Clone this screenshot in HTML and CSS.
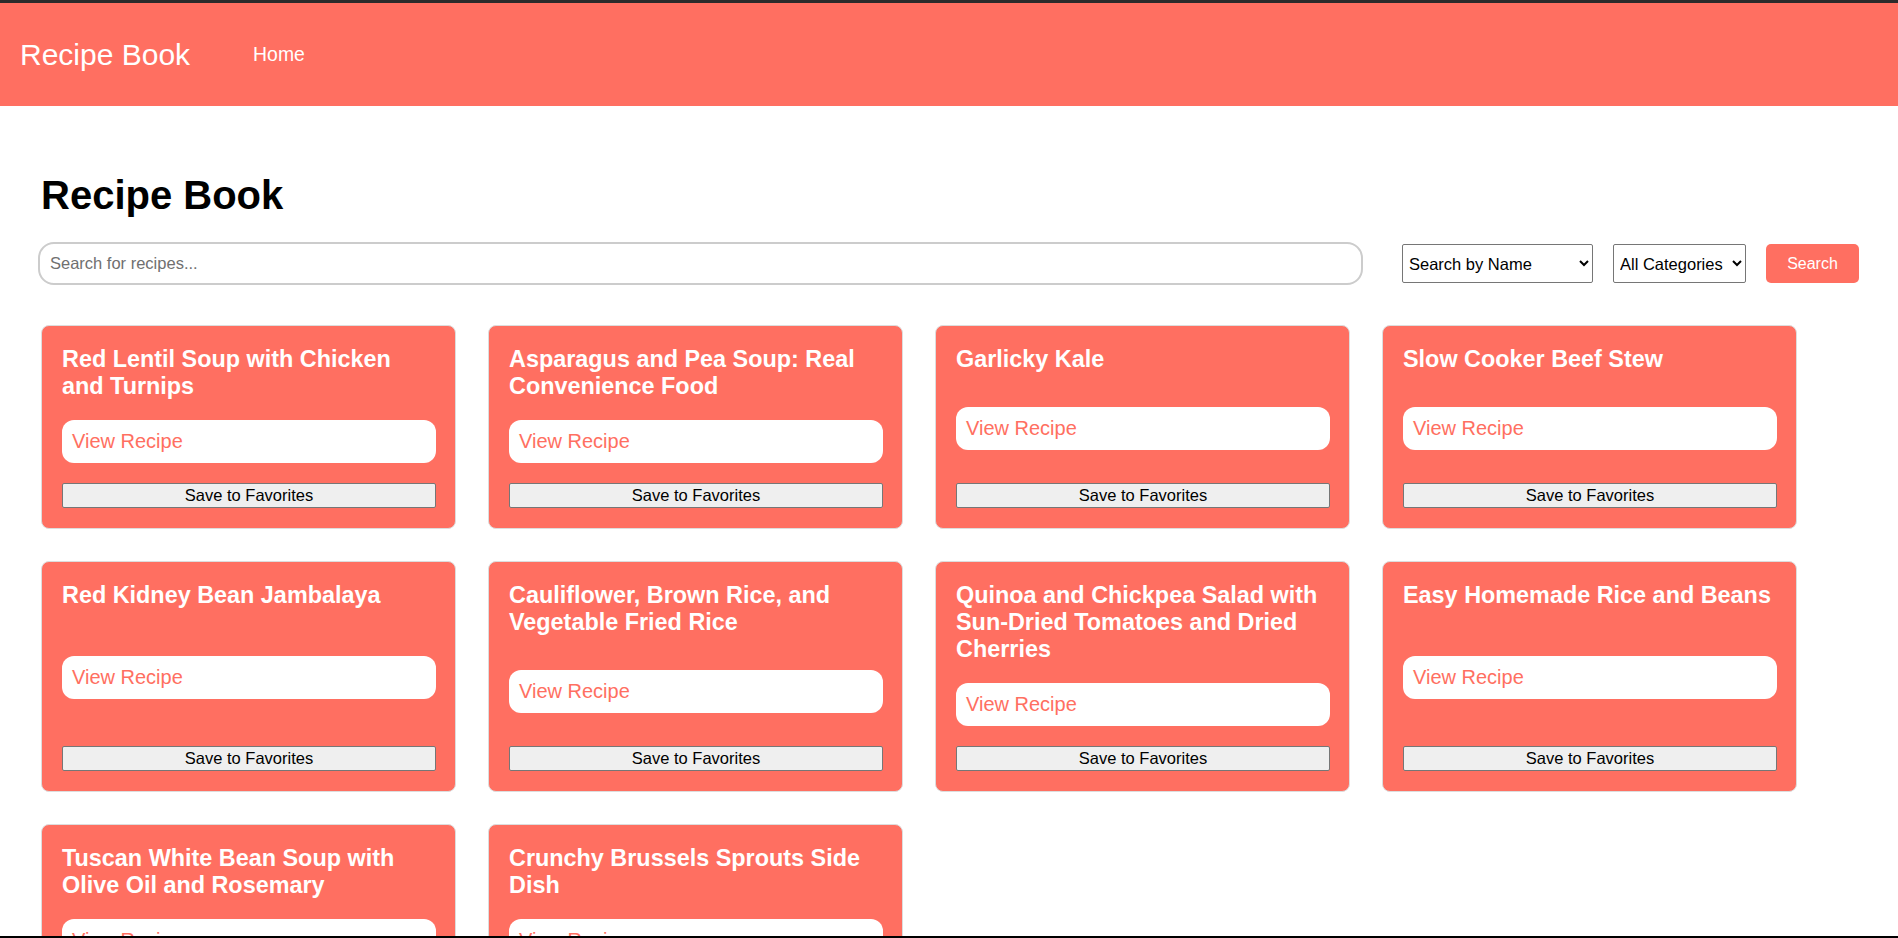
FILE: index.html
```html
<!DOCTYPE html>
<html lang="en">
<head>
<meta charset="utf-8">
<title>Recipe Book</title>
<link rel="stylesheet" href="styles.css">
</head>
<body>
<header class="site-header">
  <div class="brand">Recipe Book</div>
  <nav class="nav"><a class="nav-link" href="#">Home</a></nav>
</header>
<main class="main">
  <h1 class="page-title">Recipe Book</h1>
  <div class="search-row">
    <input class="search-input" type="text" placeholder="Search for recipes...">
    <select class="select select-mode">
      <option>Search by Name</option>
      <option>Search by Ingredient</option>
    </select>
    <select class="select select-cat">
      <option>All Categories</option>
    </select>
    <button class="search-btn" type="button">Search</button>
  </div>
  <div class="grid">
    <div class="card">
      <h3 class="card-title">Red Lentil Soup with Chicken and Turnips</h3>
      <a class="view-link" href="#">View Recipe</a>
      <button class="fav-btn" type="button">Save to Favorites</button>
    </div>
    <div class="card">
      <h3 class="card-title">Asparagus and Pea Soup: Real Convenience Food</h3>
      <a class="view-link" href="#">View Recipe</a>
      <button class="fav-btn" type="button">Save to Favorites</button>
    </div>
    <div class="card">
      <h3 class="card-title">Garlicky Kale</h3>
      <a class="view-link" href="#">View Recipe</a>
      <button class="fav-btn" type="button">Save to Favorites</button>
    </div>
    <div class="card">
      <h3 class="card-title">Slow Cooker Beef Stew</h3>
      <a class="view-link" href="#">View Recipe</a>
      <button class="fav-btn" type="button">Save to Favorites</button>
    </div>
    <div class="card">
      <h3 class="card-title">Red Kidney Bean Jambalaya</h3>
      <a class="view-link" href="#">View Recipe</a>
      <button class="fav-btn" type="button">Save to Favorites</button>
    </div>
    <div class="card">
      <h3 class="card-title">Cauliflower, Brown Rice, and Vegetable Fried Rice</h3>
      <a class="view-link" href="#">View Recipe</a>
      <button class="fav-btn" type="button">Save to Favorites</button>
    </div>
    <div class="card">
      <h3 class="card-title">Quinoa and Chickpea Salad with Sun-Dried Tomatoes and Dried Cherries</h3>
      <a class="view-link" href="#">View Recipe</a>
      <button class="fav-btn" type="button">Save to Favorites</button>
    </div>
    <div class="card">
      <h3 class="card-title">Easy Homemade Rice and Beans</h3>
      <a class="view-link" href="#">View Recipe</a>
      <button class="fav-btn" type="button">Save to Favorites</button>
    </div>
    <div class="card">
      <h3 class="card-title">Tuscan White Bean Soup with Olive Oil and Rosemary</h3>
      <a class="view-link" href="#">View Recipe</a>
      <button class="fav-btn" type="button">Save to Favorites</button>
    </div>
    <div class="card">
      <h3 class="card-title">Crunchy Brussels Sprouts Side Dish</h3>
      <a class="view-link" href="#">View Recipe</a>
      <button class="fav-btn" type="button">Save to Favorites</button>
    </div>
  </div>
</main>
</body>
</html>
```
FILE: styles.css
```css
* {
  box-sizing: border-box;
}

html {
  border-top: 3px solid #2b2b2b;
}

body {
  margin: 0;
  font-family: "Liberation Sans", Arial, sans-serif;
  background: #ffffff;
  color: #000000;
}

body::after {
  content: "";
  position: fixed;
  left: 0;
  right: 0;
  bottom: 0;
  height: 2px;
  background: #000000;
}

.site-header {
  display: flex;
  align-items: center;
  height: 103px;
  padding: 0 20px;
  background: #ff6f61;
  color: #ffffff;
}

.brand {
  font-size: 30px;
  margin-right: 63px;
}

.nav-link {
  color: #ffffff;
  text-decoration: none;
  font-size: 19.4px;
}

.main {
  padding: 40px 39px 40px 41px;
}

.page-title {
  font-size: 40px;
  font-weight: bold;
  margin: 27px 0 24px;
}

.search-row {
  display: flex;
  align-items: center;
  gap: 20px;
  margin-bottom: 40px;
}

.search-input {
  flex: 1;
  height: 43px;
  margin-left: -3px;
  margin-right: 19px;
  padding: 0 10px;
  border: 2px solid #cccccc;
  border-radius: 16px;
  font-family: "Liberation Sans", Arial, sans-serif;
  font-size: 16.5px;
  color: #000000;
  outline: none;
}

.search-input::placeholder {
  color: #707070;
}

.select {
  height: 39px;
  border: 1px solid #767676;
  border-radius: 2px;
  background: #ffffff;
  font-family: "Liberation Sans", Arial, sans-serif;
  font-size: 16.5px;
  color: #000000;
  padding: 0 2px;
}

.select-mode {
  width: 191px;
}

.select-cat {
  width: 133px;
}

.search-btn {
  height: 39px;
  width: 93px;
  border: none;
  border-radius: 5px;
  background: #ff6f61;
  color: #ffffff;
  font-family: "Liberation Sans", Arial, sans-serif;
  font-size: 16px;
}

.grid {
  display: grid;
  grid-template-columns: repeat(4, 415px);
  column-gap: 32px;
  row-gap: 32px;
}

.card {
  display: flex;
  flex-direction: column;
  justify-content: space-between;
  background: #ff6f61;
  border: 1px solid #dddddd;
  border-radius: 8px;
  padding: 20px 19px 20px 20px;
}

.card-title {
  margin: 0 0 20px;
  font-size: 23.4px;
  line-height: 27px;
  font-weight: bold;
  color: #ffffff;
}

.view-link {
  display: block;
  height: 43px;
  padding: 10px 10px;
  margin-bottom: 20px;
  background: #ffffff;
  border-radius: 12px;
  color: #ff6f61;
  text-decoration: none;
  font-size: 20px;
  line-height: 23px;
}

.fav-btn {
  display: block;
  width: 100%;
  height: 25px;
  padding: 0;
  background: #efefef;
  border: 1px solid #767676;
  border-radius: 2px;
  color: #000000;
  font-family: "Liberation Sans", Arial, sans-serif;
  font-size: 16.5px;
}
```
